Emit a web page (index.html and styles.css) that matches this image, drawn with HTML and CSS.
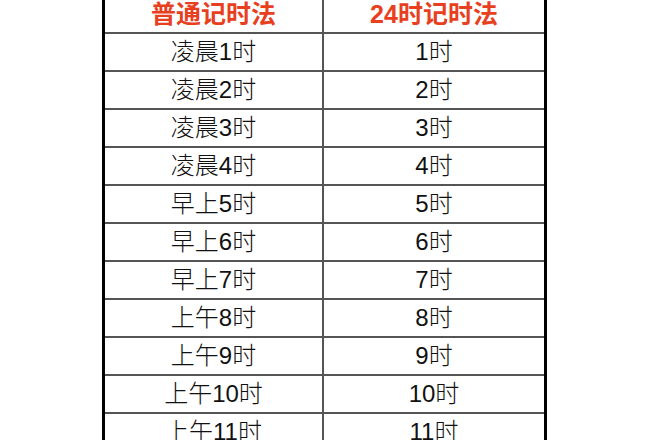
FILE: index.html
```html
<!DOCTYPE html>
<html lang="zh-CN">
<head>
<meta charset="utf-8">
<title>24时记时法</title>
<link rel="stylesheet" href="styles.css">
</head>
<body>
<div class="sheet">
  <div class="row head"><div class="cell c1">普通记时法</div><div class="cell c2">24时记时法</div></div>
  <div class="row"><div class="cell c1">凌晨1时</div><div class="cell c2">1时</div></div>
  <div class="row"><div class="cell c1">凌晨2时</div><div class="cell c2">2时</div></div>
  <div class="row"><div class="cell c1">凌晨3时</div><div class="cell c2">3时</div></div>
  <div class="row"><div class="cell c1">凌晨4时</div><div class="cell c2">4时</div></div>
  <div class="row"><div class="cell c1">早上5时</div><div class="cell c2">5时</div></div>
  <div class="row"><div class="cell c1">早上6时</div><div class="cell c2">6时</div></div>
  <div class="row"><div class="cell c1">早上7时</div><div class="cell c2">7时</div></div>
  <div class="row"><div class="cell c1">上午8时</div><div class="cell c2">8时</div></div>
  <div class="row"><div class="cell c1">上午9时</div><div class="cell c2">9时</div></div>
  <div class="row"><div class="cell c1">上午10时</div><div class="cell c2">10时</div></div>
  <div class="row"><div class="cell c1">上午11时</div><div class="cell c2">11时</div></div>
</div>
</body>
</html>
```

FILE: styles.css
```css
html, body {
  margin: 0;
  padding: 0;
  background: #fff;
  overflow: hidden;
}
body {
  font-family: "Liberation Sans", "Noto Sans CJK SC", sans-serif;
  color: #111;
}
.sheet {
  margin: -4px 0 0 102px;
  width: 439px;
  border-left: 3px solid #000;
  border-right: 3px solid #000;
}
.row {
  display: flex;
  height: 36px;
  border-bottom: 2px solid #555;
}
.cell {
  display: flex;
  align-items: center;
  justify-content: center;
  font-size: 24px;
  font-weight: 300;
  line-height: 36px;
}
.c1 {
  width: 217px;
  border-right: 2px solid #555;
}
.c2 {
  flex: 1;
}
.head .cell {
  color: #e8401f;
  font-weight: bold;
  font-size: 25px;
}
```
